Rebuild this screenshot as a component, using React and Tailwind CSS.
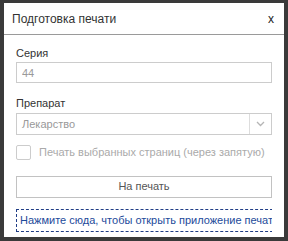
import React, { useState } from 'react';

const PrintDialog = () => {
  const [series, setSeries] = useState('');
  const [selectedPages, setSelectedPages] = useState(false);

  return (
    <div className="w-[288px] h-[241px] bg-[#3a3a3a] pt-[3px] pl-[4px] font-['Liberation_Sans',Arial,sans-serif]">
      <div className="w-[280px] h-[234px] bg-white flex flex-col overflow-hidden">
        {/* Header */}
        <div className="h-[32px] shrink-0 border-b border-[#9a9a9a] flex items-center justify-between pl-2 pr-[10px]">
          <span className="text-[12px] text-[#333]">Подготовка печати</span>
          <button className="text-[12px] leading-none text-[#222]">x</button>
        </div>

        {/* Body */}
        <div className="px-3 pt-[11px] flex flex-col">
          <label className="text-[11px] leading-[15px] text-[#333] mb-[1px]">Серия</label>
          <input
            type="text"
            value={series}
            onChange={(e) => setSeries(e.target.value)}
            placeholder="44"
            className="w-full h-[21px] border border-[#ccc] px-[5px] text-[11px] text-[#333] placeholder:text-[#999] outline-none"
          />

          <label className="text-[11px] leading-[15px] text-[#333] mt-[13px] mb-[2px]">Препарат</label>
          <div className="w-full h-[22px] border border-[#ccc] flex items-stretch">
            <div className="flex-1 flex items-center px-[5px] text-[11px] text-[#999]">Лекарство</div>
            <div className="w-[22px] border-l border-[#ddd] flex items-center justify-center">
              <svg width="9" height="6" viewBox="0 0 9 6">
                <path d="M1 1 L4.5 4.5 L8 1" fill="none" stroke="#b5b5b5" strokeWidth="1.3" />
              </svg>
            </div>
          </div>

          <label className="flex items-center mt-[9px] cursor-default">
            <span
              onClick={() => setSelectedPages(!selectedPages)}
              className="w-[15px] h-[15px] border border-[#ccc] rounded-[2px] bg-white shrink-0"
            ></span>
            <span className="ml-[8px] text-[11px] text-[#aaa] whitespace-nowrap">
              Печать выбранных страниц (через запятую)
            </span>
          </label>

          <button className="mt-[15px] w-full h-[22px] border border-[#c2c2c2] bg-white text-[11px] text-[#555]">
            На печать
          </button>

          <div className="mt-[11px] w-full overflow-hidden">
            <div className="w-max h-[23px] border border-dashed border-[#1f3d86] flex items-center pl-[3px] pr-2 text-[11px] text-[#1d4a9a] whitespace-nowrap">
              Нажмите сюда, чтобы открыть приложение печати
            </div>
          </div>
        </div>
      </div>
    </div>
  );
};

export default PrintDialog;
